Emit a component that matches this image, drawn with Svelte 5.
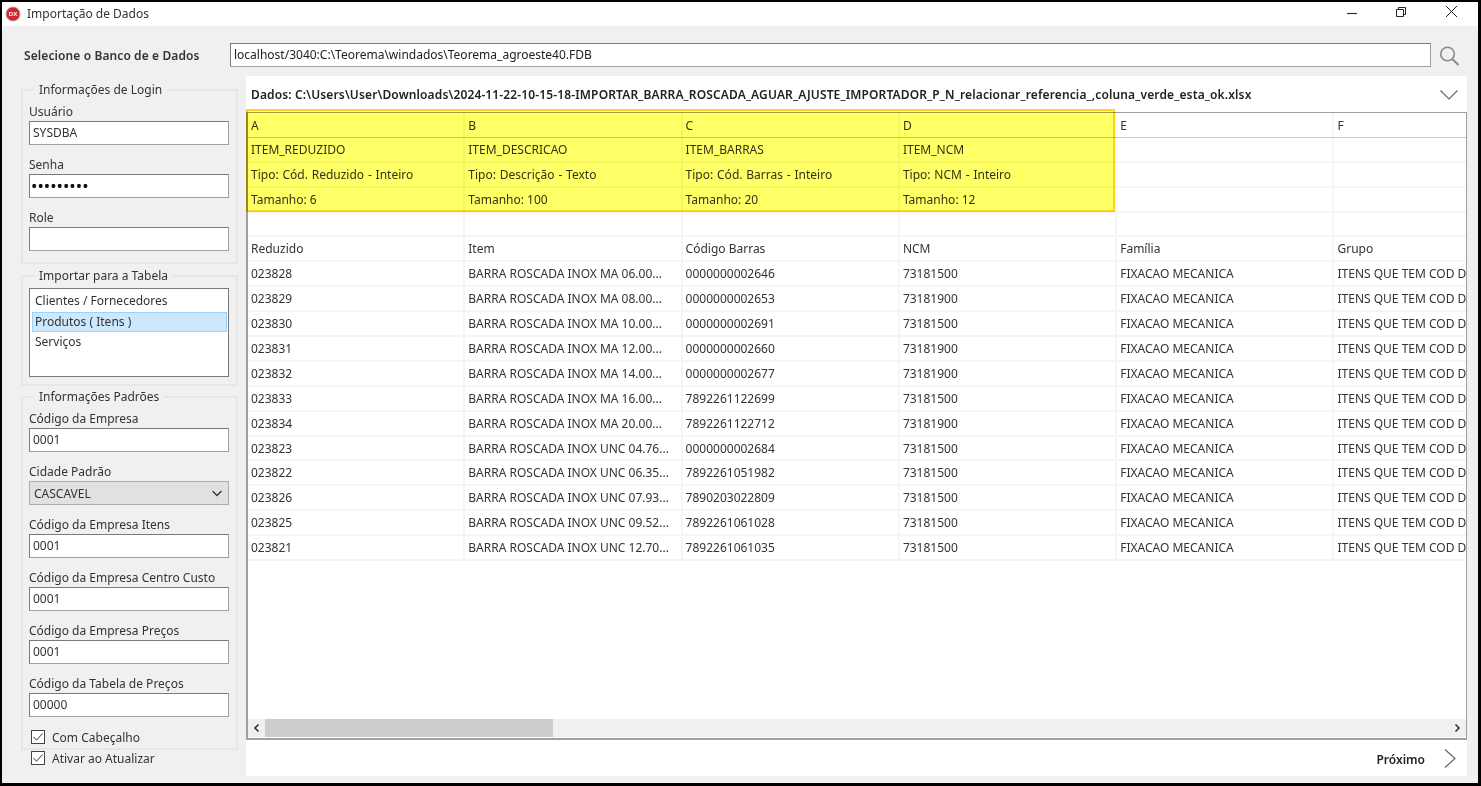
<script>
    const letters = ["A", "B", "C", "D", "E", "F"];
    const meta = [
        ["ITEM_REDUZIDO", "ITEM_DESCRICAO", "ITEM_BARRAS", "ITEM_NCM", "", ""],
        ["Tipo: Cód. Reduzido - Inteiro", "Tipo: Descrição - Texto", "Tipo: Cód. Barras - Inteiro", "Tipo: NCM - Inteiro", "", ""],
        ["Tamanho: 6", "Tamanho: 100", "Tamanho: 20", "Tamanho: 12", "", ""],
        ["", "", "", "", "", ""],
        ["Reduzido", "Item", "Código Barras", "NCM", "Família", "Grupo"]
    ];
    const items = [
        ["023828", "MA 06.00...", "0000000002646", "73181500"],
        ["023829", "MA 08.00...", "0000000002653", "73181900"],
        ["023830", "MA 10.00...", "0000000002691", "73181500"],
        ["023831", "MA 12.00...", "0000000002660", "73181900"],
        ["023832", "MA 14.00...", "0000000002677", "73181900"],
        ["023833", "MA 16.00...", "7892261122699", "73181500"],
        ["023834", "MA 20.00...", "7892261122712", "73181900"],
        ["023823", "UNC 04.76...", "0000000002684", "73181500"],
        ["023822", "UNC 06.35...", "7892261051982", "73181500"],
        ["023826", "UNC 07.93...", "7890203022809", "73181500"],
        ["023825", "UNC 09.52...", "7892261061028", "73181500"],
        ["023821", "UNC 12.70...", "7892261061035", "73181500"]
    ];
    // the last column runs out of the panel, only this much of it is visible
    const rows = items.map((r) => [r[0], "BARRA ROSCADA INOX " + r[1], r[2], r[3], "FIXACAO MECANICA", "ITENS QUE TEM COD D"]);
    const tables = ["Clientes / Fornecedores", "Produtos ( Itens )", "Serviços"];
</script>

<div class="window">
    <header class="titlebar">
        <svg class="appicon" width="16" height="16" viewBox="0 0 16 16">
            <circle cx="8" cy="8" r="7" fill="#d8232f" stroke="#a9a9a9" />
            <text x="8" y="10.2" text-anchor="middle" font-size="6" font-weight="700" fill="#fff" font-family="Liberation Sans, sans-serif">DX</text>
        </svg>
        <span class="title">Importação de Dados</span>
        <div class="controls">
            <svg width="14" height="14" viewBox="0 0 14 14"><path d="M2 8.5h10" stroke="#333" stroke-width="1.2" fill="none" /></svg>
            <svg class="restore" width="12" height="12" viewBox="0 0 12 12"><path d="M1.5 3.5h7v7h-7zM3.5 3.5v-2h7v7h-2" stroke="#222" fill="none" /></svg>
            <svg width="13" height="13" viewBox="0 0 13 13"><path d="M1 1l11 11M12 1L1 12" stroke="#222" fill="none" /></svg>
        </div>
    </header>

    <div class="body">
        <div class="dbrow">
            <span class="dblabel">Selecione o Banco de e Dados</span>
            <div class="input dbinput">localhost/3040:C:\Teorema\windados\Teorema_agroeste40.FDB</div>
            <svg class="search" width="22" height="22" viewBox="0 0 22 22">
                <circle cx="8.5" cy="10" r="6.8" fill="none" stroke="#8a8a8a" stroke-width="1.6" />
                <path d="M13.3 15l6.2 6" stroke="#8a8a8a" stroke-width="2" fill="none" />
            </svg>
        </div>

        <div class="columns">
            <aside class="sidebar">
                <fieldset class="login">
                    <legend>Informações de Login</legend>
                    <div class="field">
                        <span class="label">Usuário</span>
                        <div class="input">SYSDBA</div>
                    </div>
                    <div class="field">
                        <span class="label">Senha</span>
                        <div class="input password">•••••••••</div>
                    </div>
                    <div class="field">
                        <span class="label">Role</span>
                        <div class="input"></div>
                    </div>
                </fieldset>

                <fieldset class="tables">
                    <legend>Importar para a Tabela</legend>
                    <div class="listbox">
                        {#each tables as t, i}
                            <div class="option" class:selected={i === 1}>{t}</div>
                        {/each}
                    </div>
                </fieldset>

                <fieldset class="defaults">
                    <legend>Informações Padrões</legend>
                    <div class="field">
                        <span class="label">Código da Empresa</span>
                        <div class="input">0001</div>
                    </div>
                    <div class="field">
                        <span class="label">Cidade Padrão</span>
                        <div class="select">
                            <span>CASCAVEL</span>
                            <svg width="12" height="8" viewBox="0 0 12 8"><path d="M1.5 2L6 6.5 10.5 2" stroke="#333" stroke-width="1.3" fill="none" /></svg>
                        </div>
                    </div>
                    <div class="field">
                        <span class="label">Código da Empresa Itens</span>
                        <div class="input">0001</div>
                    </div>
                    <div class="field">
                        <span class="label">Código da Empresa Centro Custo</span>
                        <div class="input">0001</div>
                    </div>
                    <div class="field">
                        <span class="label">Código da Empresa Preços</span>
                        <div class="input">0001</div>
                    </div>
                    <div class="field">
                        <span class="label">Código da Tabela de Preços</span>
                        <div class="input">00000</div>
                    </div>
                    <div class="check first">
                        <svg width="14" height="14" viewBox="0 0 14 14"><rect x="0.5" y="0.5" width="13" height="13" fill="#fff" stroke="#444" /><path d="M2.5 7l3 3.2 6-6.7" stroke="#333" fill="none" /></svg>
                        Com Cabeçalho
                    </div>
                </fieldset>

                <div class="check">
                    <svg width="14" height="14" viewBox="0 0 14 14"><rect x="0.5" y="0.5" width="13" height="13" fill="#fff" stroke="#444" /><path d="M2.5 7l3 3.2 6-6.7" stroke="#333" fill="none" /></svg>
                    Ativar ao Atualizar
                </div>
            </aside>

            <main class="panel">
                <div class="filebar">
                    <span class="file">Dados: C:\Users\User\Downloads\2024-11-22-10-15-18-IMPORTAR_BARRA_ROSCADA_AGUAR_AJUSTE_IMPORTADOR_P_N_relacionar_referencia_,coluna_verde_esta_ok.xlsx</span>
                    <svg width="20" height="12" viewBox="0 0 20 12"><path d="M1.5 1.5L10 10l8.5-8.5" stroke="#666" stroke-width="1.2" fill="none" /></svg>
                </div>

                <div class="grid">
                    <div class="cells">
                        <div class="row head">
                            {#each letters as l}<div class="cell">{l}</div>{/each}
                        </div>
                        {#each meta as r, i}
                            <div class="row" class:tipo={i === 1}>
                                {#each r as c}<div class="cell">{c}</div>{/each}
                            </div>
                        {/each}
                        {#each rows as r}
                            <div class="row">
                                {#each r as c}<div class="cell">{c}</div>{/each}
                            </div>
                        {/each}
                    </div>
                    <div class="scrollbar">
                        <svg class="arrow" width="18" height="18" viewBox="0 0 18 18"><path d="M10.5 5.5L7 9l3.5 3.5" stroke="#333" stroke-width="1.6" fill="none" /></svg>
                        <div class="track"><div class="thumb"></div></div>
                        <svg width="18" height="18" viewBox="0 0 18 18"><path d="M7.5 5.5L11 9l-3.5 3.5" stroke="#333" stroke-width="1.6" fill="none" /></svg>
                    </div>
                </div>

                <div class="footer">
                    <span class="next">Próximo</span>
                    <svg width="14" height="20" viewBox="0 0 14 20"><path d="M2 .5l10 9-10 9" stroke="#666" stroke-width="1.2" fill="none" /></svg>
                </div>

                <div class="highlight"></div>
            </main>
        </div>
    </div>
</div>

<style>
    :global(body) {
        margin: 0;
        background: #000;
    }

    .window {
        box-sizing: border-box;
        width: 1481px;
        height: 786px;
        border: solid #000;
        border-width: 2px 3px 3px 2px;
        background: #f0f0f0;
        font-family: "Noto Sans", "Open Sans", sans-serif;
        font-size: 12px;
        color: #333;
        display: flex;
        flex-direction: column;
        overflow: hidden;
    }

    .titlebar {
        height: 24px;
        flex: none;
        background: #fff;
        display: flex;
        align-items: center;
        padding-left: 3px;
    }

    .title {
        margin-left: 6px;
        padding-bottom: 2px;
    }

    .controls {
        margin-left: auto;
        display: flex;
        align-items: center;
        margin-right: 20px;
        gap: 37px;
        margin-top: -5px;
    }

    .restore {
        margin: 0 1px 0 -1px;
    }

    .body {
        flex: 1;
        padding: 17px 11px 7px 19px;
        min-height: 0;
        display: flex;
        flex-direction: column;
    }

    .dbrow {
        display: flex;
        align-items: center;
        height: 24px;
        flex: none;
    }

    .dblabel {
        width: 209px;
        padding-left: 3px;
        box-sizing: border-box;
        font-weight: 600;
        letter-spacing: 0.1px;
    }

    .input {
        box-sizing: border-box;
        height: 24px;
        border: 1px solid #7a7a7a;
        border-color: #7a7a7a #a0a0a0 #a0a0a0 #7a7a7a;
        background: #fff;
        padding-left: 3px;
        line-height: 22px;
    }

    .dbinput {
        width: 1201px;
        color: #222;
    }

    .password {
        padding-left: 1px;
        font-size: 17px;
        color: #111;
    }

    .search {
        margin-left: 8px;
    }

    .columns {
        display: flex;
        flex: 1;
        min-height: 0;
        margin-top: 9px;
    }

    .sidebar {
        width: 217px;
        margin-right: 8px;
        padding-top: 6px;
        flex: none;
    }

    fieldset {
        box-sizing: border-box;
        margin: 0;
        border: 2px solid #e6e6e6;
        padding: 0 7px 0 6px;
    }

    legend {
        margin-left: 5px;
        padding: 0 5px;
        line-height: 16px;
    }

    .login {
        height: 182px;
        padding-top: 5px;
    }

    .tables {
        height: 118px;
        margin-top: 4px;
        padding-top: 4px;
    }

    .defaults {
        height: 361px;
        margin-top: 3px;
        padding-top: 5px;
    }

    .field {
        margin-bottom: 11px;
    }

    .label {
        display: block;
        height: 18px;
        line-height: 18px;
    }

    .listbox {
        box-sizing: border-box;
        height: 89px;
        border: 1px solid #7a7a7a;
        background: #fff;
        padding: 2px 1px 2px 2px;
    }

    .option {
        height: 20.5px;
        line-height: 20px;
        padding-left: 3px;
    }

    .option.selected {
        background: #cce8ff;
        border: 1px solid #99d1ff;
        box-sizing: border-box;
        padding-left: 2px;
        line-height: 18px;
    }

    .select {
        box-sizing: border-box;
        height: 24px;
        border: 1px solid #adadad;
        background: #e1e1e1;
        display: flex;
        align-items: center;
        justify-content: space-between;
        padding: 0 5px 0 4px;
    }

    .check {
        display: flex;
        align-items: center;
        gap: 7px;
        height: 16px;
        padding-left: 10px;
    }

    .check.first {
        height: 18px;
        padding-left: 2px;
    }

    .panel {
        position: relative;
        width: 1221px;
        background: #fff;
        display: flex;
        flex-direction: column;
    }

    .filebar {
        height: 36px;
        flex: none;
        box-sizing: border-box;
        display: flex;
        align-items: center;
        justify-content: space-between;
        padding: 1px 8px 0 5px;
    }

    .file {
        font-weight: 600;
        color: #222;
        letter-spacing: 0.137px;
    }

    .grid {
        height: 628px;
        flex: none;
        box-sizing: border-box;
        border: 1px solid #a0a0a0;
        border-left-width: 2px;
        border-bottom-width: 2px;
        display: flex;
        flex-direction: column;
        overflow: hidden;
    }

    .cells {
        flex: 1;
        min-height: 0;
        overflow: hidden;
    }

    .row {
        display: grid;
        grid-template-columns: repeat(6, 217.3px);
        height: 24.9px;
        box-sizing: border-box;
        border-bottom: 2px solid #f5f5f5;
    }

    .row.head {
        border-bottom: 1px solid #c8c8c8;
    }

    .row.tipo {
        word-spacing: 0.7px;
    }

    .cell {
        box-sizing: border-box;
        border-right: 2px solid #f5f5f5;
        padding-left: 3px;
        line-height: 23px;
        white-space: nowrap;
        overflow: hidden;
    }

    .row.head .cell {
        line-height: 25px;
    }

    .scrollbar {
        height: 18px;
        flex: none;
        background: #f0f0f0;
        display: flex;
        margin-bottom: 1px;
    }

    .arrow {
        margin-right: -1px;
    }

    .track {
        flex: 1;
    }

    .thumb {
        width: 288px;
        height: 100%;
        background: #cdcdcd;
    }

    .footer {
        flex: 1;
        display: flex;
        align-items: center;
        justify-content: flex-end;
        padding-right: 10px;
        gap: 18px;
        padding-top: 2px;
    }

    .next {
        font-weight: 600;
        color: #222;
    }

    .highlight {
        position: absolute;
        left: 0;
        top: 33px;
        width: 869px;
        height: 103px;
        box-sizing: border-box;
        background: #ffff66;
        border: 2px solid #ffd21f;
        mix-blend-mode: multiply;
        pointer-events: none;
    }
</style>
